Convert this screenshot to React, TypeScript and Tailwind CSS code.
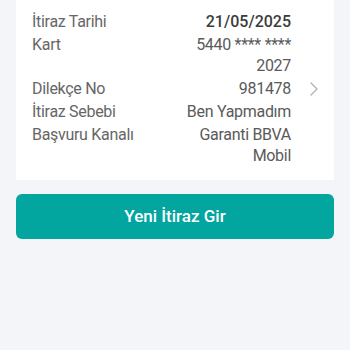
import { ChevronRight } from 'lucide-react'

type Row = {
  label: string
  value: string[]
  bold?: boolean
  chevron?: boolean
}

const rows: Row[] = [
  { label: 'İtiraz Tarihi', value: ['21/05/2025'], bold: true },
  { label: 'Kart', value: ['5440 **** ****', '2027'] },
  { label: 'Dilekçe No', value: ['981478'], chevron: true },
  { label: 'İtiraz Sebebi', value: ['Ben Yapmadım'] },
  { label: 'Başvuru Kanalı', value: ['Garanti BBVA', 'Mobil'] },
]

export default function App() {
  return (
    <div className="min-h-[350px] w-[350px] bg-[#f4f5f9] px-4 font-['Roboto',sans-serif]">
      <div className="flex flex-col gap-[2px] bg-white pl-4 pr-2 pt-[11px] pb-[14px]">
        {rows.map((r) => (
          <div key={r.label} className="flex items-start text-[16px] leading-[21px] tracking-[-0.3px]">
            <div className="flex-1 text-[#666666]">{r.label}</div>
            <div
              className={`whitespace-nowrap text-right ${
                r.bold ? 'font-medium text-[#3c3c3c] tracking-normal' : 'text-[#5a5a5a]'
              }`}
            >
              {r.value.map((line) => (
                <div key={line}>{line}</div>
              ))}
            </div>
            <div className="flex h-[21px] w-[35px] items-center justify-end">
              {r.chevron && <ChevronRight className="h-6 w-6 text-[#b0b0b0]" strokeWidth={1.3} />}
            </div>
          </div>
        ))}
      </div>
      <button className="mt-[14px] flex h-[45px] w-full items-center justify-center rounded-[6px] bg-[#03a59f] text-[17px] font-medium text-white">
        Yeni İtiraz Gir
      </button>
    </div>
  )
}
